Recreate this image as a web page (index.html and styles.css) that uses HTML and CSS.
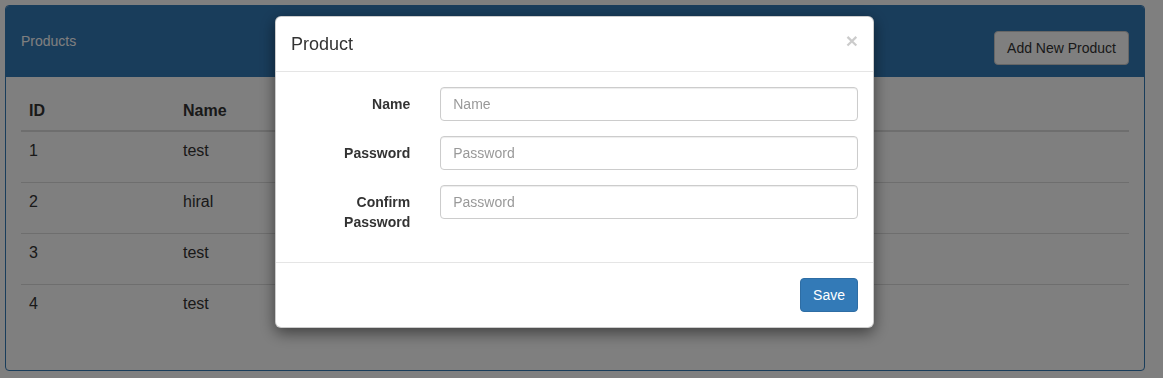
FILE: index.html
```html
<!DOCTYPE html>
<html lang="en">
  <head>
    <meta charset="UTF-8" />
    <title>Products</title>
    <link rel="stylesheet" href="styles.css">
  </head>
  <body>
    <div class="page">
      <div class="panel">
        <div class="panel-heading">
          <span class="panel-title">Products</span>
          <button class="btn btn-default">Add New Product</button>
        </div>
        <div class="panel-body">
          <table class="table">
            <thead>
              <tr>
                <th class="col-id">ID</th>
                <th>Name</th>
              </tr>
            </thead>
            <tbody>
              <tr><td>1</td><td>test</td></tr>
              <tr><td>2</td><td>hiral</td></tr>
              <tr><td>3</td><td>test</td></tr>
              <tr><td>4</td><td>test</td></tr>
            </tbody>
          </table>
        </div>
      </div>
    </div>

    <!-- modal open: backdrop + dialog -->
    <div class="backdrop"></div>
    <div class="modal">
      <div class="modal-content">
        <div class="modal-header">
          <button class="close">&times;</button>
          <h4 class="modal-title">Product</h4>
        </div>
        <div class="modal-body">
          <div class="form-group">
            <label class="control-label">Name</label>
            <div class="control"><input type="text" placeholder="Name" /></div>
          </div>
          <div class="form-group">
            <label class="control-label">Password</label>
            <div class="control"><input type="password" placeholder="Password" /></div>
          </div>
          <div class="form-group">
            <label class="control-label">Confirm Password</label>
            <div class="control"><input type="password" placeholder="Password" /></div>
          </div>
        </div>
        <div class="modal-footer">
          <button class="btn btn-primary">Save</button>
        </div>
      </div>
    </div>
  </body>
</html>
```

FILE: styles.css
```css
* {
  box-sizing: border-box;
}

body {
  margin: 0;
  font-family: "Liberation Sans", Arial, sans-serif;
  font-size: 14px;
  line-height: 20px;
  color: #333;
  background-color: #fff;
}

.page {
  padding: 5px 18px 7px 5px;
}

.panel {
  border: 1px solid #337ab7;
  border-radius: 4px;
  background-color: #fff;
}

.panel-heading {
  display: flex;
  justify-content: space-between;
  align-items: flex-start;
  padding: 25px 15px 12px;
  background-color: #337ab7;
  color: #fff;
  border-radius: 3px 3px 0 0;
}

.panel-title {
  font-size: 14px;
  line-height: 20px;
}

.panel-body {
  padding: 15px;
}

.btn {
  font-family: inherit;
  font-size: 14px;
  line-height: 20px;
  padding: 6px 12px;
  border: 1px solid transparent;
  border-radius: 4px;
  cursor: pointer;
}

.btn-default {
  color: #333;
  background-color: #fff;
  border-color: #ccc;
}

.btn-primary {
  color: #fff;
  background-color: #337ab7;
  border-color: #2e6da4;
}

.table {
  width: 100%;
  border-collapse: collapse;
  margin-bottom: 20px;
  font-size: 16px;
}

.table th,
.table td {
  text-align: left;
  vertical-align: top;
  line-height: 22px;
}

.table th {
  padding: 8px;
  border-bottom: 2px solid #ddd;
}

.table td {
  padding: 8px 8px 20px;
  border-top: 1px solid #ddd;
}

.col-id {
  width: 154px;
}

.backdrop {
  position: fixed;
  top: 0;
  right: 0;
  bottom: 0;
  left: 0;
  background-color: rgba(0, 0, 0, 0.5);
}

.modal {
  position: fixed;
  top: 16px;
  left: 275px;
  width: 599px;
}

.modal-content {
  background-color: #fff;
  border: 1px solid rgba(0, 0, 0, 0.2);
  border-radius: 6px;
  box-shadow: 0 5px 15px rgba(0, 0, 0, 0.5);
}

.modal-header {
  padding: 15px;
  border-bottom: 1px solid #e5e5e5;
}

.modal-title {
  margin: 0;
  font-size: 18px;
  font-weight: 500;
  line-height: 24px;
}

.close {
  float: right;
  margin-top: -2px;
  padding: 0;
  border: 0;
  background: transparent;
  font-family: inherit;
  font-size: 21px;
  font-weight: bold;
  line-height: 1;
  color: #000;
  opacity: 0.2;
}

.modal-body {
  padding: 15px 0;
}

.form-group {
  display: grid;
  grid-template-columns: 25% 75%;
  margin-bottom: 15px;
}

.control-label {
  padding: 7px 15px 0;
  text-align: right;
  font-weight: bold;
}

.control {
  padding: 0 15px;
}

.control input {
  display: block;
  width: 100%;
  height: 34px;
  padding: 6px 12px;
  font-family: inherit;
  font-size: 14px;
  color: #555;
  border: 1px solid #ccc;
  border-radius: 4px;
  box-shadow: inset 0 1px 1px rgba(0, 0, 0, 0.075);
}

.control input::placeholder {
  color: #999;
}

.modal-footer {
  padding: 15px;
  text-align: right;
  border-top: 1px solid #e5e5e5;
}
```
